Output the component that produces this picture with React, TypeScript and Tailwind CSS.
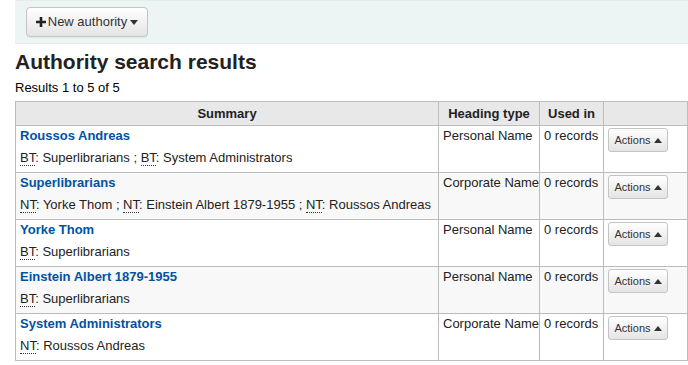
import React from "react";

type Rel = { tag: string; name: string };
type Row = { name: string; rels: Rel[]; type: string };

const rows: Row[] = [
  {
    name: "Roussos Andreas",
    rels: [
      { tag: "BT", name: "Superlibrarians" },
      { tag: "BT", name: "System Administrators" },
    ],
    type: "Personal Name",
  },
  {
    name: "Superlibrarians",
    rels: [
      { tag: "NT", name: "Yorke Thom" },
      { tag: "NT", name: "Einstein Albert 1879-1955" },
      { tag: "NT", name: "Roussos Andreas" },
    ],
    type: "Corporate Name",
  },
  { name: "Yorke Thom", rels: [{ tag: "BT", name: "Superlibrarians" }], type: "Personal Name" },
  { name: "Einstein Albert 1879-1955", rels: [{ tag: "BT", name: "Superlibrarians" }], type: "Personal Name" },
  { name: "System Administrators", rels: [{ tag: "NT", name: "Roussos Andreas" }], type: "Corporate Name" },
];

function Caret({ up }: { up?: boolean }) {
  return (
    <svg width="8" height="5" viewBox="0 0 8 5" className="inline-block ml-[3px]" fill="currentColor">
      {up ? <path d="M0 5 L4 0 L8 5 Z" /> : <path d="M0 0 L8 0 L4 5 Z" />}
    </svg>
  );
}

export default function App() {
  return (
    <div className="w-[688px] h-[365px] bg-white text-[#000] overflow-hidden font-['Liberation_Sans',Arial,sans-serif] text-[13px]">
      {/* Toolbar */}
      <div className="ml-[15px] h-[44px] bg-[#edf4f4] border-t border-b border-[#e4ecec] flex items-center pl-[11px]">
        <button className="h-[30px] w-[122px] rounded-[4px] border border-[#c4c4c4] bg-gradient-to-b from-white to-[#e4e4e4] text-[13px] text-[#333] flex items-center justify-center shadow-[0_1px_1px_rgba(0,0,0,0.05)]">
          <svg width="10" height="10" viewBox="0 0 10 10" className="mr-[2px]" fill="#222">
            <path d="M3.7 0h2.6v3.7H10v2.6H6.3V10H3.7V6.3H0V3.7h3.7z" />
          </svg>
          New authority
          <Caret />
        </button>
      </div>

      <div className="px-[15px]">
        <h1 className="text-[21px] font-bold text-[#222] leading-none mt-[7px] mb-[8px]">Authority search results</h1>
        <div className="leading-[15px] mb-[6px]">Results 1 to 5 of 5</div>

        <table className="w-[672px] table-fixed border-collapse border border-[#bcbcbc] text-[13px]">
          <colgroup>
            <col className="w-[423px]" />
            <col className="w-[101px]" />
            <col className="w-[64px]" />
            <col className="w-[84px]" />
          </colgroup>
          <thead>
            <tr className="bg-[#e8e8e8] h-[24px]">
              <th className="border border-[#bcbcbc] font-bold text-center text-[#222]">Summary</th>
              <th className="border border-[#bcbcbc] font-bold text-center text-[#222]">Heading type</th>
              <th className="border border-[#bcbcbc] font-bold text-center text-[#222]">Used in</th>
              <th className="border border-[#bcbcbc]"></th>
            </tr>
          </thead>
          <tbody>
            {rows.map((r, i) => (
              <tr key={i} className={`h-[47px] ${i % 2 === 1 ? "bg-[#f8f8f8]" : "bg-white"}`}>
                <td className="border border-[#bcbcbc] align-top px-[4px] pt-[2px]">
                  <div className="font-bold text-[#0052a3] leading-[16px]">{r.name}</div>
                  <div className="mt-[6px] leading-[16px] text-[#222] whitespace-nowrap">
                    {r.rels.map((rel, j) => (
                      <span key={j}>
                        {j > 0 && " ; "}
                        <abbr className="no-underline border-b border-dotted border-[#333]">{rel.tag}</abbr>: {rel.name}
                      </span>
                    ))}
                  </div>
                </td>
                <td className="border border-[#bcbcbc] align-top pl-[4px] pr-[2px] pt-[2px] leading-[16px] text-[#222] whitespace-nowrap">{r.type}</td>
                <td className="border border-[#bcbcbc] align-top px-[4px] pt-[2px] leading-[16px] text-[#222] whitespace-nowrap">0 records</td>
                <td className="border border-[#bcbcbc] align-top px-[4px] pt-[2px]">
                  <button className="h-[24px] w-[60px] rounded-[3px] border border-[#c4c4c4] bg-gradient-to-b from-white to-[#e4e4e4] text-[11px] text-[#333] flex items-center justify-center">
                    Actions
                    <Caret up />
                  </button>
                </td>
              </tr>
            ))}
          </tbody>
        </table>
      </div>
    </div>
  );
}
